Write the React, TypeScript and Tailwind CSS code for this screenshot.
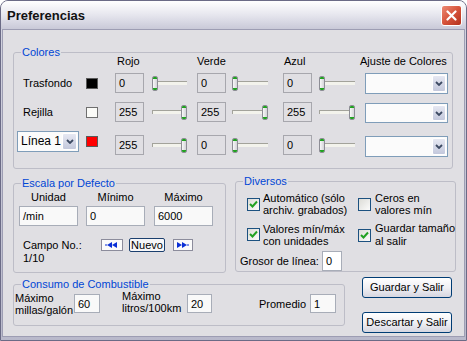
import React from 'react';

// Ventana de preferencias estilo Windows XP (tema plateado)

const GroupBox: React.FC<{ title: string; className?: string; children?: React.ReactNode }> = ({
  title,
  className,
  children
}) => (
  <fieldset className={`shrink-0 rounded-[3px] border border-[#bdbdc7] ${className ?? ''}`}>
    <legend className="ml-[7px] h-[12px] px-[1px] leading-[12px] text-[#0046d5]">{title}</legend>
    {children}
  </fieldset>
);

const ValueBox: React.FC<{ value: string; className?: string; disabled?: boolean }> = ({
  value,
  className,
  disabled
}) => (
  <div
    className={`flex shrink-0 items-center border pl-[3px] ${
      disabled ? 'border-[#a7a7ad] bg-[#e0dfe3]' : 'border-[#a8adb8] bg-[#f9f9f9]'
    } ${className ?? ''}`}
  >
    {value}
  </div>
);

const Swatch: React.FC<{ color: string; className?: string }> = ({ color, className }) => (
  <div className={`h-[11px] w-[12px] shrink-0 border border-[#5a5a5a] ${color} ${className ?? ''}`} />
);

const Slider: React.FC<{ max?: boolean; className?: string }> = ({ max, className }) => (
  <div className={`relative h-[15px] shrink-0 ${className ?? ''}`}>
    <div className="absolute left-0 right-0 top-[5px] h-[4px] border-t border-l border-[#a3a39b] border-b-white border-r-white bg-[#f3f3ec]" />
    <div
      className={`absolute top-0 flex h-[15px] w-[6px] flex-col overflow-hidden rounded-[2px] border border-[#8d8d95] bg-[#ececec] ${
        max ? 'right-0' : 'left-0'
      }`}
    >
      <div className="h-[2px] bg-[#21a121]" />
      <div className="flex-1 bg-gradient-to-r from-[#f8f8f8] to-[#d4d4d8]" />
      <div className="h-[2px] bg-[#21a121]" />
    </div>
  </div>
);

const Chevron = () => (
  <svg width="8" height="5" viewBox="0 0 8 5">
    <path d="M1 1 L4 4 L7 1" fill="none" stroke="#3d4a63" strokeWidth="1.8" />
  </svg>
);

const Dropdown: React.FC<{ className?: string; label?: string; btn?: string }> = ({
  className,
  label,
  btn
}) => (
  <div className={`flex shrink-0 border border-[#7f9db9] bg-[#fbfbfb] ${className ?? ''}`}>
    <div className="flex flex-1 items-center whitespace-nowrap pl-[3px]">{label}</div>
    <div
      className={`m-[1px] flex items-center justify-center rounded-[2px] border border-white bg-gradient-to-b from-[#e6e8f2] to-[#c3c8dc] ${
        btn ?? 'w-[14px]'
      }`}
    >
      <Chevron />
    </div>
  </div>
);

const Check: React.FC<{ checked?: boolean }> = ({ checked }) => (
  <div className="flex h-[13px] w-[13px] shrink-0 items-center justify-center border border-[#1c5180] bg-gradient-to-br from-[#dcdcd7] to-[#fbfbfb]">
    {checked && (
      <svg width="9" height="9" viewBox="0 0 9 9">
        <path d="M1 4 L3.5 6.5 L8 1.5" fill="none" stroke="#21a121" strokeWidth="2" />
      </svg>
    )}
  </div>
);

const NavButton: React.FC<{ dir: 'left' | 'right'; className?: string }> = ({ dir, className }) => (
  <div
    className={`flex h-[12px] shrink-0 items-center justify-center border border-[#8c8c9c] bg-[#fbfbfb] ${className ?? ''}`}
  >
    <svg width="14" height="6" viewBox="0 0 14 6">
      {dir === 'left' ? (
        <g fill="#0a2fd6">
          <rect x="0" y="2.5" width="2" height="1" />
          <path d="M2 3 L7 0 L7 6 Z" />
          <path d="M7 3 L12 0 L12 6 Z" />
        </g>
      ) : (
        <g fill="#0a2fd6">
          <path d="M1 0 L6 3 L1 6 Z" />
          <path d="M6 0 L11 3 L6 6 Z" />
          <rect x="11" y="2.5" width="2" height="1" />
        </g>
      )}
    </svg>
  </div>
);

const XpButton: React.FC<{ label: string; className?: string }> = ({ label, className }) => (
  <div
    className={`flex h-[21px] items-center justify-center rounded-[3px] border border-[#003c74] bg-gradient-to-b from-[#ffffff] via-[#f0f0f4] to-[#d6d6e0] ${className ?? ''}`}
  >
    {label}
  </div>
);

export default function App() {
  return (
    <div className="h-[341px] w-[467px] bg-white font-['Liberation_Sans',Arial,sans-serif] text-[11px] leading-[13px] text-black">
      <div className="flex h-[341px] w-[467px] flex-col rounded-t-[8px] border border-[#6b6b86] bg-gradient-to-b from-[#d4d4e0] to-[#b9b9cb]">
        {/* barra de título */}
        <div className="flex h-[28px] shrink-0 items-center justify-between rounded-t-[7px] bg-gradient-to-b from-[#ffffff] via-[#e6e6ee] to-[#c9c9d8] pl-[6px] pr-[4px] pt-[1px]">
          <span className="text-[13px] font-bold text-[#111]">Preferencias</span>
          <div className="flex h-[21px] w-[21px] items-center justify-center rounded-[3px] border border-white bg-gradient-to-br from-[#ec8a73] via-[#d6533b] to-[#b4301c]">
            <svg width="11" height="11" viewBox="0 0 11 11">
              <path d="M1.5 1.5 L9.5 9.5 M9.5 1.5 L1.5 9.5" stroke="white" strokeWidth="2.2" strokeLinecap="round" />
            </svg>
          </div>
        </div>

        {/* cuerpo */}
        <div className="mx-[1px] mb-[3px] flex flex-1 flex-col border border-[#9d9db3] bg-[#e0dfe3]">
          <GroupBox title="Colores" className="ml-[10px] mt-[16px] h-[123px] w-[440px]">
            <div className="-mt-[3px] flex h-[13px]">
              <span className="ml-[103px] w-[80px]">Rojo</span>
              <span className="w-[87px]">Verde</span>
              <span className="w-[75px]">Azul</span>
              <span className="ml-[1px]">Ajuste de Colores</span>
            </div>

            <div className="mt-[4px] flex h-[22px] items-center">
              <div className="w-[72px] shrink-0 pl-[9px]">Trasfondo</div>
              <Swatch color="bg-black" />
              <ValueBox disabled value="0" className="ml-[17px] h-[20px] w-[29px]" />
              <Slider className="ml-[8px] w-[35px]" />
              <ValueBox disabled value="0" className="ml-[10px] h-[20px] w-[29px]" />
              <Slider className="ml-[6px] w-[36px]" />
              <ValueBox disabled value="0" className="ml-[15px] h-[20px] w-[29px]" />
              <Slider className="ml-[7px] w-[36px]" />
              <Dropdown className="ml-[10px] h-[21px] w-[83px]" />
            </div>

            <div className="mt-[7px] flex h-[22px] items-center">
              <div className="w-[72px] shrink-0 pl-[9px]">Rejilla</div>
              <Swatch color="bg-[#fbfbf8]" className="border-[#6f6f6f]" />
              <ValueBox disabled value="255" className="ml-[17px] h-[20px] w-[29px]" />
              <Slider max className="ml-[8px] w-[35px]" />
              <ValueBox disabled value="255" className="ml-[10px] h-[20px] w-[29px]" />
              <Slider max className="ml-[6px] w-[36px]" />
              <ValueBox disabled value="255" className="ml-[15px] h-[20px] w-[29px]" />
              <Slider max className="ml-[7px] w-[36px]" />
              <Dropdown className="ml-[10px] mt-[2px] h-[20px] w-[83px]" />
            </div>

            <div className="mt-[8px] flex items-start">
              <Dropdown
                label="Línea 1"
                btn="w-[15px]"
                className="ml-[3px] h-[21px] w-[62px] text-[12px]"
              />
              <Swatch color="bg-[#ff0000]" className="ml-[7px] mt-[5px]" />
              <ValueBox disabled value="255" className="ml-[17px] mt-[4px] h-[20px] w-[29px]" />
              <Slider max className="ml-[8px] mt-[7px] w-[35px]" />
              <ValueBox disabled value="0" className="ml-[10px] mt-[4px] h-[20px] w-[29px]" />
              <Slider className="ml-[6px] mt-[7px] w-[36px]" />
              <ValueBox disabled value="0" className="ml-[15px] mt-[4px] h-[20px] w-[29px]" />
              <Slider className="ml-[7px] mt-[7px] w-[36px]" />
              <Dropdown className="ml-[10px] mt-[5px] h-[21px] w-[83px]" />
            </div>
          </GroupBox>

          <div className="flex items-start">
            <GroupBox title="Escala por Defecto" className="ml-[10px] mt-[8px] h-[96px] w-[213px]">
              <div className="mt-[2px] flex h-[13px]">
                <span className="ml-[5px] w-[59px] text-center">Unidad</span>
                <span className="ml-[8px] w-[59px] text-center">Mínimo</span>
                <span className="ml-[9px] w-[59px] text-center">Máximo</span>
              </div>
              <div className="mt-[2px] flex">
                <ValueBox value="/min" className="ml-[5px] h-[20px] w-[59px]" />
                <ValueBox value="0" className="ml-[8px] h-[20px] w-[59px]" />
                <ValueBox value="6000" className="ml-[9px] h-[20px] w-[59px]" />
              </div>
              <div className="mt-[13px] flex items-start">
                <div className="ml-[9px] w-[78px] shrink-0">
                  Campo No.:
                  <br />
                  1/10
                </div>
                <NavButton dir="left" className="w-[22px]" />
                <div className="-mt-[1px] ml-[6px] flex h-[14px] w-[36px] items-center justify-center rounded-[2px] border border-[#1b3f6e] bg-[#f7f7f9]">
                  Nuevo
                </div>
                <NavButton dir="right" className="ml-[8px] w-[20px]" />
              </div>
            </GroupBox>

            <GroupBox title="Diversos" className="ml-[9px] mt-[6px] h-[97px] w-[216px]">
              <div className="mt-[5px] grid grid-cols-[122px_1fr] leading-[12px]">
                <div className="flex items-center pl-[11px]">
                  <Check checked />
                  <span className="ml-[3px] whitespace-nowrap">
                    Automático (sólo
                    <br />
                    archiv. grabados)
                  </span>
                </div>
                <div className="flex items-center">
                  <Check />
                  <span className="ml-[4px] whitespace-nowrap">
                    Ceros en
                    <br />
                    valores mín
                  </span>
                </div>
                <div className="mt-[5px] flex items-center pl-[11px]">
                  <Check checked />
                  <span className="ml-[3px] whitespace-nowrap">
                    Valores mín/máx
                    <br />
                    con unidades
                  </span>
                </div>
                <div className="mt-[6px] flex items-center">
                  <Check checked />
                  <span className="ml-[4px] whitespace-nowrap leading-[13px]">
                    Guardar tamaño
                    <br />
                    al salir
                  </span>
                </div>
              </div>
              <div className="mt-[3px] flex items-center">
                <span className="ml-[4px] w-[82px] shrink-0 whitespace-nowrap">Grosor de línea:</span>
                <ValueBox value="0" className="h-[20px] w-[20px] bg-white" />
              </div>
            </GroupBox>
          </div>

          <div className="mt-[5px] flex items-start">
            <GroupBox title="Consumo de Combustible" className="ml-[10px] h-[48px] w-[332px]">
              <div className="flex items-start leading-[12px]">
                <span className="ml-[1px] mt-[2px] w-[59px] shrink-0 whitespace-nowrap">
                  Máximo
                  <br />
                  millas/galón
                </span>
                <ValueBox value="60" className="mt-[4px] h-[19px] w-[26px]" />
                <span className="ml-[22px] w-[65px] shrink-0 whitespace-nowrap">
                  Máximo
                  <br />
                  litros/100km
                </span>
                <ValueBox value="20" className="mt-[4px] h-[19px] w-[25px]" />
                <span className="ml-[47px] mt-[8px] w-[51px] shrink-0">Promedio</span>
                <ValueBox value="1" className="mt-[4px] h-[19px] w-[26px]" />
              </div>
            </GroupBox>
            <div className="-mt-[1px] ml-[17px] flex w-[90px] flex-col">
              <XpButton label="Guardar y Salir" />
              <XpButton label="Descartar y Salir" className="mt-[14px]" />
            </div>
          </div>
        </div>
      </div>
    </div>
  );
}
